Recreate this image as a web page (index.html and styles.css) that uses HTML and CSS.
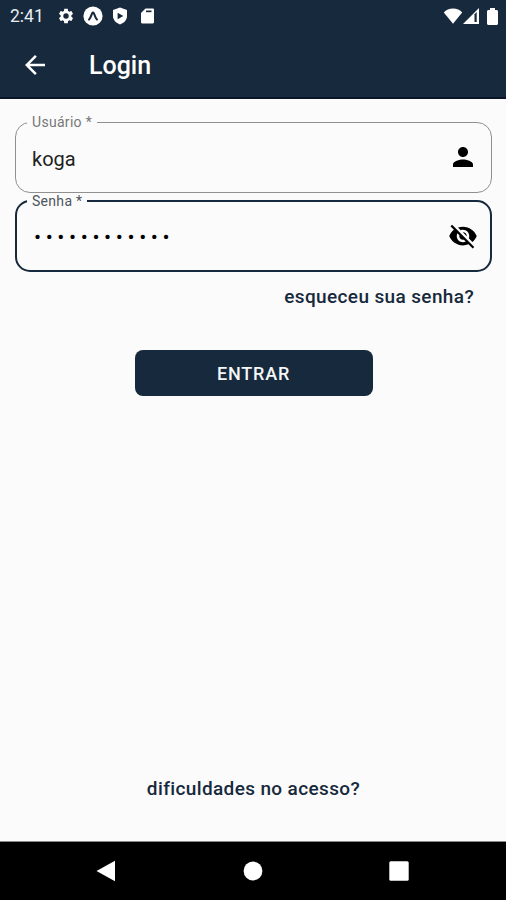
FILE: index.html
```html
<!DOCTYPE html>
<html lang="pt-BR">
<head>
  <meta charset="UTF-8" />
  <meta name="viewport" content="width=device-width, initial-scale=1" />
  <title>Login</title>
  <link rel="stylesheet" href="styles.css">
</head>
<body>

<div class="screen">
  <div class="status-bar">
    <span class="clock">2:41</span>
    <div class="status-icons">
      <svg class="icon-gear" viewBox="0 0 24 24"><path d="M19.14 12.94c.04-.3.06-.61.06-.94 0-.32-.02-.64-.07-.94l2.03-1.58a.49.49 0 0 0 .12-.61l-1.92-3.32a.49.49 0 0 0-.59-.22l-2.39.96a7 7 0 0 0-1.62-.94l-.36-2.54a.48.48 0 0 0-.48-.41h-3.84a.47.47 0 0 0-.47.41l-.36 2.54c-.59.24-1.13.57-1.62.94l-2.39-.96a.48.48 0 0 0-.59.22L2.74 8.87a.47.47 0 0 0 .12.61l2.03 1.58a7.3 7.3 0 0 0 0 1.88l-2.03 1.58a.49.49 0 0 0-.12.61l1.92 3.32c.12.22.37.29.59.22l2.39-.96c.5.38 1.03.7 1.62.94l.36 2.54c.05.24.24.41.48.41h3.84c.24 0 .44-.17.47-.41l.36-2.54a7 7 0 0 0 1.62-.94l2.39.96c.22.08.47 0 .59-.22l1.92-3.32a.47.47 0 0 0-.12-.61zM12 15.6a3.6 3.6 0 1 1 0-7.2 3.6 3.6 0 0 1 0 7.2z"/></svg>
      <svg class="icon-expo" viewBox="0 0 20 20"><circle cx="10" cy="10" r="9.6"/><path class="mark" d="M6 13.600C7.500 12 8.400 9.500 9.200 7.200Q10 5.700 10.800 7.200C11.600 9.500 12.500 12 14 13.600"/></svg>
      <svg class="icon-shield" viewBox="0 0 16 18"><path d="M8 .5 15 3v6c0 4-3 7-7 8.500C4 16 1 13 1 9V3z"/><path class="cut" d="M5.600 5.800 11.300 9l-5.700 3.200z"/></svg>
      <svg class="icon-sd" viewBox="0 0 14 16"><path d="M5 .5h7.300c.8 0 1.200.5 1.200 1.200v12.600c0 .7-.4 1.200-1.200 1.200H1.700c-.8 0-1.200-.5-1.200-1.200V5z"/><path class="cut" d="M5.500 2.500H11v1.700H5.500z"/></svg>
    </div>
    <div class="signal-icons">
      <svg class="icon-wifi" viewBox="0 0 20 16"><path d="M10 15.700.8 4.600C3 2 6.200.6 10 .6s7 1.400 9.200 4z"/></svg>
      <svg class="icon-cell" viewBox="0 0 16 16"><path d="M0 16 16 0v16z"/><path class="cut" d="M11.500 6.200V14h2.200V4z"/></svg>
      <svg class="icon-battery" viewBox="0 0 11 17"><path d="M3 0h5v2h1.500c.8 0 1.500.7 1.500 1.500v12c0 .8-.7 1.500-1.500 1.500h-8C.7 17 0 16.300 0 15.500v-12C0 2.700.7 2 1.500 2H3z"/></svg>
    </div>
  </div>

  <header class="app-bar">
    <svg class="icon-back" viewBox="0 0 24 24"><path d="M20 11H7.830l5.590-5.590L12 4l-8 8 8 8 1.410-1.410L7.830 13H20z"/></svg>
    <h1>Login</h1>
  </header>

  <main class="content">
    <form class="login-form">
      <fieldset class="field">
        <legend>Usuário *</legend>
        <div class="field-row">
          <input type="text" value="koga" aria-label="Usuário" />
          <svg class="field-icon" viewBox="0 0 24 24"><path d="M12 12c2.210 0 4-1.790 4-4s-1.790-4-4-4-4 1.790-4 4 1.790 4 4 4zm0 2c-2.670 0-8 1.340-8 4v2h16v-2c0-2.660-5.330-4-8-4z"/></svg>
        </div>
      </fieldset>

      <fieldset class="field active">
        <legend>Senha *</legend>
        <div class="field-row">
          <span class="password">••••••••••••</span>
          <svg class="field-icon" viewBox="0 0 24 24"><path d="M12 7c2.760 0 5 2.240 5 5 0 .65-.13 1.260-.36 1.830l2.920 2.920c1.510-1.260 2.700-2.890 3.430-4.750-1.730-4.390-6-7.500-11-7.500-1.400 0-2.740.25-3.980.7l2.160 2.160C10.740 7.130 11.350 7 12 7zM2 4.270l2.280 2.280.46.46C3.080 8.300 1.780 10.020 1 12c1.730 4.390 6 7.500 11 7.500 1.550 0 3.030-.3 4.380-.84l.42.42L19.730 22 21 20.730 3.270 3 2 4.270zM7.530 9.800l1.550 1.550c-.05.21-.08.43-.08.65 0 1.660 1.340 3 3 3 .22 0 .44-.03.65-.08l1.550 1.550c-.67.33-1.410.53-2.200.53-2.760 0-5-2.240-5-5 0-.79.2-1.530.53-2.200zm4.310-.78 3.150 3.150.02-.16c0-1.660-1.340-3-3-3l-.17.01z"/></svg>
        </div>
      </fieldset>

      <a class="link forgot">esqueceu sua senha?</a>
      <button type="button" class="btn-enter">ENTRAR</button>
    </form>
    <a class="link help">dificuldades no acesso?</a>
  </main>

  <nav class="nav-bar">
    <svg viewBox="0 0 22 22"><path d="M1.500 11 20 .8v20.400z"/></svg>
    <svg viewBox="0 0 22 22"><circle cx="11" cy="11" r="9.400"/></svg>
    <svg viewBox="0 0 22 22"><rect x="1.300" y="1.300" width="19.400" height="19.400" rx="1.500"/></svg>
  </nav>
</div>

</body>
</html>
```
FILE: styles.css
```css
* {
  box-sizing: border-box;
}

body {
  margin: 0;
  font-family: Roboto, sans-serif;
  background: #fbfbfb;
  color: #17293c;
}

svg {
  display: block;
  flex: none;
  fill: #fff;
}

.screen {
  height: 900px;
  display: flex;
  flex-direction: column;
}

/* status bar */
.status-bar {
  height: 32px;
  display: flex;
  align-items: center;
  padding: 0 8px 0 10px;
  background: #17293c;
}

.clock {
  width: 47px;
  font-size: 17.5px;
  color: #e8edf2;
}

.status-icons {
  display: flex;
  align-items: center;
}

.cut {
  fill: #17293c;
}

.icon-gear {
  width: 18px;
  height: 18px;
}

.icon-expo {
  width: 20px;
  height: 20px;
  margin-left: 8px;
}

.icon-expo .mark {
  fill: none;
  stroke: #17293c;
  stroke-width: 2;
  stroke-linecap: round;
}

.icon-shield {
  width: 16px;
  height: 18px;
  margin-left: 9px;
}

.icon-sd {
  width: 15px;
  height: 16px;
  margin-left: 12px;
}

.signal-icons {
  display: flex;
  align-items: center;
  margin-left: auto;
}

.icon-wifi {
  width: 20px;
  height: 16px;
}

.icon-cell {
  width: 16px;
  height: 16px;
}

.icon-battery {
  width: 11px;
  height: 17px;
  margin-left: 8px;
}

/* header */
.app-bar {
  height: 67px;
  display: flex;
  align-items: center;
  padding-left: 20px;
  background: #17293c;
  border-bottom: 2px solid #0c1527;
}

.icon-back {
  width: 30px;
  height: 30px;
}

.app-bar h1 {
  margin: 2px 0 0 39px;
  font-size: 25px;
  font-weight: 500;
  color: #fff;
}

/* form */
.content {
  flex: 1;
  display: flex;
  flex-direction: column;
  justify-content: space-between;
  padding: 15px 14px 40px 15px;
}

.login-form {
  display: flex;
  flex-direction: column;
}

.field {
  height: 79px;
  min-width: 0;
  margin: 0;
  padding: 0 13px 0 11px;
  border: 1px solid #909090;
  border-radius: 15px;
}

.field legend {
  height: 16px;
  padding: 0 5px;
  font-size: 14px;
  line-height: 17px;
  letter-spacing: 0.3px;
  color: #777;
}

.field.active {
  border: 2px solid #17293c;
  padding: 0 12px 0 10px;
}

.field.active legend {
  color: #4c5560;
}

.field-row {
  display: flex;
  align-items: center;
  justify-content: space-between;
  padding: 12px 0 0 5px;
}

.field input {
  width: 300px;
  padding: 4px 0 0;
  border: none;
  outline: none;
  background: none;
  font: 20px Roboto, sans-serif;
  color: #222;
}

.password {
  padding: 2px 0 0 2px;
  font-size: 21px;
  line-height: 28px;
  letter-spacing: 4.6px;
  color: #000;
}

.field-icon {
  width: 30px;
  height: 30px;
  fill: #000;
}

.link {
  font-size: 19px;
  font-weight: 500;
  line-height: 24px;
  letter-spacing: 0.37px;
}

.forgot {
  align-self: flex-end;
  margin: 13px 18px 0 0;
}

.btn-enter {
  align-self: center;
  width: 238px;
  height: 46px;
  margin-top: 41px;
  border: none;
  border-radius: 8px;
  background: #17293c;
  color: #f4f6f8;
  font: 500 18px Roboto, sans-serif;
  letter-spacing: 0.8px;
}

.help {
  align-self: center;
}

/* android buttons */
.nav-bar {
  height: 59px;
  display: flex;
  align-items: center;
  justify-content: space-between;
  padding: 0 96px 0 95px;
  background: #000;
  border-top: 1px solid #8a8a8a;
}

.nav-bar svg {
  width: 22px;
  height: 22px;
}
```
